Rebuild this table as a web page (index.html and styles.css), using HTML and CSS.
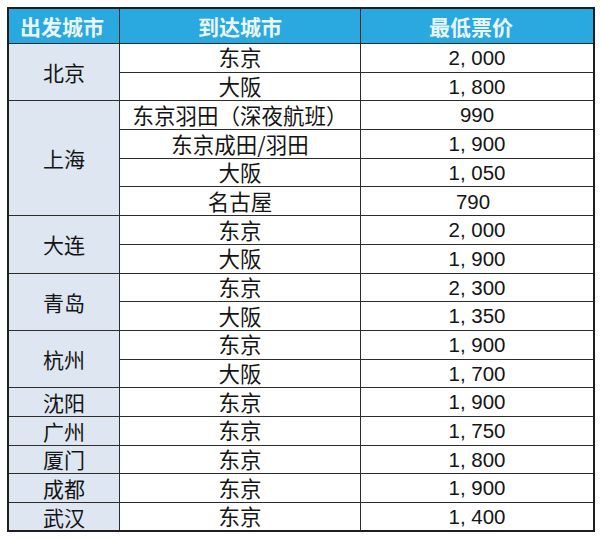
FILE: index.html
```html
<!DOCTYPE html>
<html lang="zh">
<head>
<meta charset="utf-8">
<link rel="stylesheet" href="styles.css">
</head>
<body>
<table class="fares">
  <thead>
    <tr class="head">
      <th class="c1">出发城市</th>
      <th class="c2">到达城市</th>
      <th class="c3">最低票价</th>
    </tr>
  </thead>
  <tbody>
    <tr><td class="from" rowspan="2">北京</td><td class="to">东京</td><td class="price">2, 000</td></tr>
    <tr><td class="to">大阪</td><td class="price">1, 800</td></tr>
    <tr><td class="from" rowspan="4">上海</td><td class="to">东京羽田（深夜航班）</td><td class="price">990</td></tr>
    <tr><td class="to">东京成田/羽田</td><td class="price">1, 900</td></tr>
    <tr><td class="to">大阪</td><td class="price">1, 050</td></tr>
    <tr><td class="to">名古屋</td><td class="price shift">790</td></tr>
    <tr><td class="from" rowspan="2">大连</td><td class="to">东京</td><td class="price">2, 000</td></tr>
    <tr><td class="to">大阪</td><td class="price">1, 900</td></tr>
    <tr><td class="from" rowspan="2">青岛</td><td class="to">东京</td><td class="price">2, 300</td></tr>
    <tr><td class="to">大阪</td><td class="price">1, 350</td></tr>
    <tr><td class="from" rowspan="2">杭州</td><td class="to">东京</td><td class="price">1, 900</td></tr>
    <tr><td class="to">大阪</td><td class="price">1, 700</td></tr>
    <tr><td class="from">沈阳</td><td class="to">东京</td><td class="price">1, 900</td></tr>
    <tr><td class="from">广州</td><td class="to">东京</td><td class="price">1, 750</td></tr>
    <tr><td class="from">厦门</td><td class="to">东京</td><td class="price">1, 800</td></tr>
    <tr><td class="from">成都</td><td class="to">东京</td><td class="price">1, 900</td></tr>
    <tr><td class="from">武汉</td><td class="to">东京</td><td class="price">1, 400</td></tr>
  </tbody>
</table>
</body>
</html>
```

FILE: styles.css
```css
html, body {
  margin: 0;
  padding: 0;
  background: #ffffff;
}

body {
  padding: 7px 0 0 7px;
  font-family: "Noto Sans CJK SC", "Liberation Sans", sans-serif;
  color: #151515;
}

.fares {
  border-collapse: collapse;
  border: 2px solid #1e1e1e;
  table-layout: fixed;
  width: 588px;
}

.fares th,
.fares td {
  border: 1px solid #2c2c2c;
  padding: 0;
  text-align: center;
  vertical-align: middle;
  line-height: 1.15;
}

.c1 { width: 106px; }
.c2 { width: 240px; }
.c3 { width: auto; }

.head th {
  height: 34px;
  background: #2aa8e0;
  color: #e9f7fd;
  font-weight: 700;
  font-size: 21px;
}

.head .c1 {
  padding-right: 4px;
}

.head .c3 {
  padding-right: 12px;
}

.fares tbody tr {
  height: 28.7px;
}

.from {
  background: #dde6f1;
  font-size: 21px;
  font-weight: 400;
}

.to {
  font-size: 21.5px;
  background: #ffffff;
}

.price {
  font-family: "Liberation Sans", Arial, sans-serif;
  font-size: 20.5px;
  padding-right: 24px;
  background: #ffffff;
}

.price.shift {
  padding-right: 8px;
}
```
